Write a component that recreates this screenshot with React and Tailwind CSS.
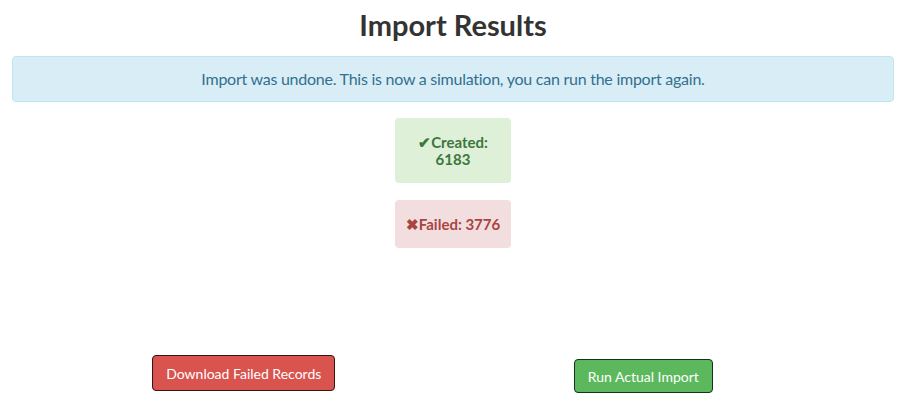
import React from "react";

const App = () => {
  return (
    <div className="w-[906px] h-[403px] bg-white font-['Lato',sans-serif] overflow-hidden">
      <h1 className="text-center text-[29px] font-bold text-[#333] leading-none pt-[10px] h-[56px]">Import Results</h1>

      <div className="mx-[12px] h-[46px] flex items-center justify-center bg-[#d9edf7] border border-[#bce8f1] rounded text-[#31708f] text-[16px] tracking-[-0.25px]">
        Import was undone. This is now a simulation, you can run the import again.
      </div>

      <div className="flex flex-col items-center mt-[16px] gap-[17px]">
        <div className="w-[116px] h-[65px] flex flex-col items-center justify-center bg-[#dff0d8] rounded text-[#3c763d] font-bold text-[15px] leading-[17px]">
          <span><span className="text-[15px]">✔</span>Created:</span>
          <span>6183</span>
        </div>
        <div className="w-[116px] h-[48px] flex items-center justify-center bg-[#f2dede] rounded text-[#a94442] font-bold text-[15px]">
          <span className="text-[15px]">✖</span>Failed: 3776
        </div>
      </div>

      <div className="ml-[44px] w-[799px] grid grid-cols-2 mt-[107px]">
        <div className="flex justify-center">
          <button className="h-[36px] px-[13px] bg-[#d9534f] border border-[#3a1413] rounded text-white text-[14px]">Download Failed Records</button>
        </div>
        <div className="flex justify-center pt-[4px]">
          <button className="h-[34px] px-[13px] bg-[#5cb85c] border border-[#17311a] rounded text-white text-[14px]">Run Actual Import</button>
        </div>
      </div>
    </div>
  );
};

export default App;
